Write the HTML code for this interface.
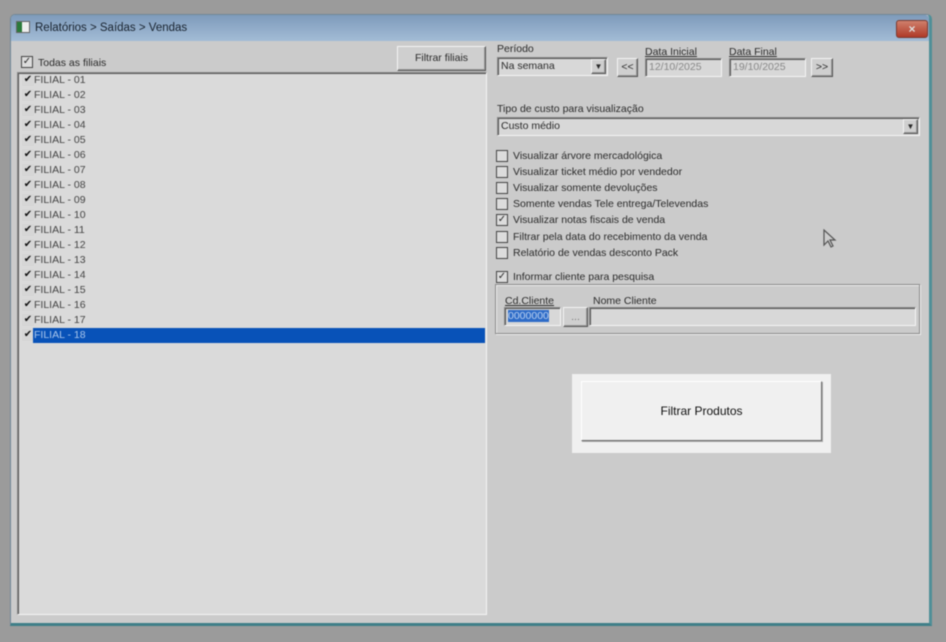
<!DOCTYPE html>
<html><head><meta charset="utf-8"><style>
*{box-sizing:border-box;margin:0;padding:0}
body{width:946px;height:642px;background:#9b9b9b;position:relative;overflow:hidden;font-family:"Liberation Sans",sans-serif;font-size:10.5px;color:#2a2a2a;filter:blur(0.55px)}
.a{position:absolute}
.win{left:10px;top:14px;width:922px;height:612px;background:#cbcbcb;border:1px solid #6f8798;border-right:3px solid #4f8f98;border-bottom:3px solid #3f7f88;border-radius:5px 5px 0 0}
.title{left:0;top:0;width:100%;height:26px;background:linear-gradient(#7e9bbb,#a3bcd6);border-radius:4px 4px 0 0}
.sunk{border:1px solid;border-color:#8a8a8a #f4f4f4 #f4f4f4 #8a8a8a;box-shadow:inset 1px 1px 0 #555}
.btn{background:#cfcfcf;border:1px solid;border-color:#f4f4f4 #555 #555 #f4f4f4;box-shadow:inset -1px -1px 0 #999;text-align:center}
.cb{width:12px;height:12px;border:1px solid #444;background:#dcdcdc;font-size:10px;line-height:10px;text-align:center}
.item{position:absolute;left:2px;height:15px;line-height:15px;width:465px}
.item i{position:absolute;left:2px;top:1px;width:12px;height:12px;background:#d6d6d6;font-style:normal;font-size:10px;line-height:12px;text-align:center;color:#111}
.item span{position:absolute;left:13px;padding-left:1px;color:#444}
.inp{background:#d8d8d8;height:19px;line-height:17px;padding-left:3px}
</style></head><body>
<div class="a win">
 <div class="a title">
  <div class="a" style="left:5px;top:6px;width:14px;height:12px;background:#eee;border:1px solid #666"><div style="width:5px;height:10px;background:#2a7a3a"></div></div>
  <div class="a" style="left:24px;top:7px;font-size:11.5px;color:#18222e">Relatórios &gt; Saídas &gt; Vendas</div>
  <div class="a" style="left:885px;top:5px;width:32px;height:18px;background:linear-gradient(#d0806c,#b03a28);border:1px solid #7a3a30;border-radius:3px;color:#ddd;text-align:center;font-size:12px;line-height:16px;font-weight:bold">×</div>
 </div>
</div>
<div class="a cb" style="left:21px;top:56px;">✓</div>
<div class="a" style="left:38px;top:57px;">Todas as filiais</div>
<div class="a btn" style="left:397px;top:46px;width:89px;height:25px;line-height:23px">Filtrar filiais</div>
<div class="a sunk" style="left:17px;top:72px;width:470px;height:543px;background:#dadada">
 <div class="item" style="top:0px"><i>✔</i><span>FILIAL - 01</span></div>
 <div class="item" style="top:15px"><i>✔</i><span>FILIAL - 02</span></div>
 <div class="item" style="top:30px"><i>✔</i><span>FILIAL - 03</span></div>
 <div class="item" style="top:45px"><i>✔</i><span>FILIAL - 04</span></div>
 <div class="item" style="top:60px"><i>✔</i><span>FILIAL - 05</span></div>
 <div class="item" style="top:75px"><i>✔</i><span>FILIAL - 06</span></div>
 <div class="item" style="top:90px"><i>✔</i><span>FILIAL - 07</span></div>
 <div class="item" style="top:105px"><i>✔</i><span>FILIAL - 08</span></div>
 <div class="item" style="top:120px"><i>✔</i><span>FILIAL - 09</span></div>
 <div class="item" style="top:135px"><i>✔</i><span>FILIAL - 10</span></div>
 <div class="item" style="top:150px"><i>✔</i><span>FILIAL - 11</span></div>
 <div class="item" style="top:165px"><i>✔</i><span>FILIAL - 12</span></div>
 <div class="item" style="top:180px"><i>✔</i><span>FILIAL - 13</span></div>
 <div class="item" style="top:195px"><i>✔</i><span>FILIAL - 14</span></div>
 <div class="item" style="top:210px"><i>✔</i><span>FILIAL - 15</span></div>
 <div class="item" style="top:225px"><i>✔</i><span>FILIAL - 16</span></div>
 <div class="item" style="top:240px"><i>✔</i><span>FILIAL - 17</span></div>
 <div class="item" style="top:255px"><i>✔</i><span style="background:#0852b8;color:#a9c6ec;width:452px">FILIAL - 18</span></div>
</div>

<div class="a" style="left:497px;top:43px">Período</div>
<div class="a sunk inp" style="left:497px;top:57px;width:111px">Na semana<div class="a btn" style="right:1px;top:1px;width:15px;height:15px;font-size:8px;line-height:13px">▼</div></div>
<div class="a btn" style="left:617px;top:58px;width:21px;height:19px;line-height:17px">&lt;&lt;</div>
<div class="a" style="left:645px;top:46px;text-decoration:underline">Data Inicial</div>
<div class="a sunk inp" style="left:645px;top:58px;width:77px;color:#888">12/10/2025</div>
<div class="a" style="left:729px;top:46px;text-decoration:underline">Data Final</div>
<div class="a sunk inp" style="left:729px;top:58px;width:77px;color:#888">19/10/2025</div>
<div class="a btn" style="left:811px;top:58px;width:22px;height:19px;line-height:17px">&gt;&gt;</div>

<div class="a" style="left:497px;top:103px">Tipo de custo para visualização</div>
<div class="a sunk inp" style="left:497px;top:117px;width:423px">Custo médio<div class="a btn" style="right:1px;top:1px;width:15px;height:15px;font-size:8px;line-height:13px">▼</div></div>

<div class="a cb" style="left:496px;top:150px"></div><div class="a" style="left:513px;top:150px">Visualizar árvore mercadológica</div>
<div class="a cb" style="left:496px;top:166px"></div><div class="a" style="left:513px;top:166px">Visualizar ticket médio por vendedor</div>
<div class="a cb" style="left:496px;top:182px"></div><div class="a" style="left:513px;top:182px">Visualizar somente devoluções</div>
<div class="a cb" style="left:496px;top:198px"></div><div class="a" style="left:513px;top:198px">Somente vendas Tele entrega/Televendas</div>
<div class="a cb" style="left:496px;top:214px">✓</div><div class="a" style="left:513px;top:214px">Visualizar notas fiscais de venda</div>
<div class="a cb" style="left:496px;top:231px"></div><div class="a" style="left:513px;top:231px">Filtrar pela data do recebimento da venda</div>
<div class="a cb" style="left:496px;top:247px"></div><div class="a" style="left:513px;top:247px">Relatório de vendas desconto Pack</div>
<div class="a cb" style="left:496px;top:271px">✓</div><div class="a" style="left:513px;top:271px">Informar cliente para pesquisa</div>

<div class="a" style="left:495px;top:284px;width:425px;height:50px;border:1px solid #8a8a8a;box-shadow:1px 1px 0 #eee,inset 1px 1px 0 #eee"></div>
<div class="a" style="left:505px;top:295px;text-decoration:underline">Cd.Cliente</div>
<div class="a sunk inp" style="left:504px;top:307px;width:57px"><span style="background:#2e6cc8;color:#b9d0f0">0000000</span></div>
<div class="a btn" style="left:563px;top:307px;width:25px;height:20px;line-height:18px;color:#777">...</div>
<div class="a" style="left:593px;top:295px">Nome Cliente</div>
<div class="a sunk inp" style="left:589px;top:307px;width:327px"></div>

<div class="a" style="left:572px;top:374px;width:259px;height:79px;background:#f0f0f0"></div>
<div class="a" style="left:581px;top:381px;width:241px;height:60px;background:#f0f0f0;border:1px solid;border-color:#fff #6a6a6a #6a6a6a #fff;box-shadow:1px 1px 0 #aaa;text-align:center;line-height:58px;font-size:12px;color:#111">Filtrar Produtos</div>

<svg class="a" style="left:823px;top:229px" width="14" height="20" viewBox="0 0 14 20"><path d="M1 1 L1 16 L5 12 L8 18 L10 17 L7 11 L12 11 Z" fill="#ccc" stroke="#555" stroke-width="1.2"/></svg>
</body></html>
